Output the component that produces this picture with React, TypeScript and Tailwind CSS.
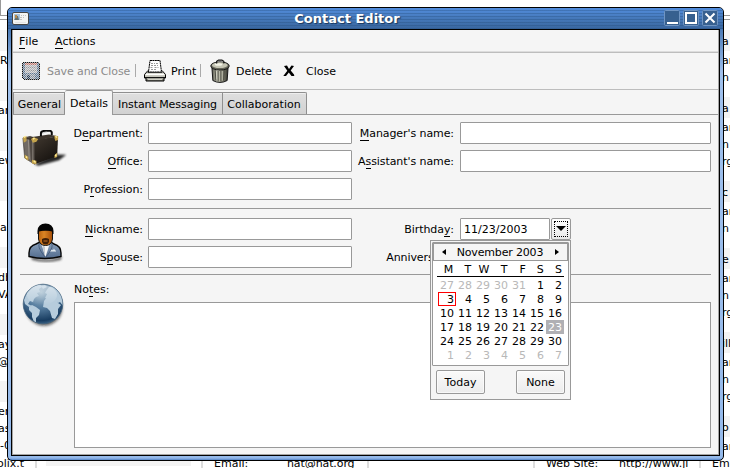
import React from "react";

type BackRow = [number, string, boolean?];

const leftRows: BackRow[] = [
  [21, "", true], [17, "R"], [12, ""], [21, "", true], [17, "ar"], [12, ""], [21, "", true], [17, "ew"], [12, ""],
  [21, "", true], [17, ""], [17, "a"], [12, ""], [21, "", true], [17, "dh"], [17, "VA"], [12, ""],
  [21, "", true], [17, "ay"], [17, "@n"], [12, ""], [21, "", true], [17, "er"], [17, "as"], [17, "-0"],
];

const rightRows: BackRow[] = [
  [21, "a", true], [17, "ar"], [17, "n"], [12, ""],
  [21, "a", true], [17, "ar"], [17, "n"], [17, "rg"], [12, ""],
  [21, "c", true], [17, "ar"], [17, "n"], [12, ""],
  [21, "e", true], [17, "ar"], [17, "n"], [17, "rg"], [12, ""],
  [21, "ill", true], [17, "ar"], [17, "n"], [17, "rg"], [12, ""],
  [21, "o", true], [17, "ar"],
];

function BackColumn({ rows, right }: { rows: BackRow[]; right?: boolean }) {
  return (
    <div className="w-[16px]">
      <div className={`h-[16px] border-b border-[#999] bg-white ${right ? "" : "border-l"}`} />
      <div className="h-[14px] bg-white pt-[3px]">
        <div className="h-px bg-[#999]" />
      </div>
      {rows.map(([h, text, band], i) => (
        <div
          key={i}
          className={`flex items-center whitespace-nowrap pt-[2px] ${right ? "pl-[8px]" : ""} ${band ? "bg-[#f3f3f3]" : "bg-white"}`}
          style={{ height: h }}
        >
          <span className={!right && text.length > 1 && text !== "-0" ? "-ml-[2px]" : ""}>{text}</span>
        </div>
      ))}
    </div>
  );
}

function Backdrop() {
  return (
    <div className="flex h-[468px] w-[730px] flex-col overflow-hidden bg-white">
      <div className="flex h-[454px] justify-between">
        <BackColumn rows={leftRows} />
        <BackColumn rows={rightRows} right />
      </div>
      <div className="flex h-[18px] shrink-0 items-center whitespace-nowrap pt-[2px]">
        <span className="-ml-[3px] w-[38px]">olix.t</span>
        <span className="h-full w-[2px] bg-[#ddd]" />
        <span className="mb-[9px] ml-[9px] h-[12px] w-[145px] bg-[#f3f3f3]" />
        <span className="ml-[10px] h-full w-[2px] bg-[#ddd]" />
        <span className="ml-[11px] w-[73px]">Email:</span>
        <span className="w-[80px] tracking-[-0.1px]">nat@nat.org</span>
        <span className="h-full w-[2px] bg-[#ddd]" />
        <span className="ml-[164px] h-full w-[2px] bg-[#ddd]" />
        <span className="ml-[11px] w-[73px]">Web Site:</span>
        <span className="w-[80px]">http://www.jl</span>
        <span className="h-full w-[2px] bg-[#ddd]" />
        <span className="ml-[11px]">Em</span>
      </div>
    </div>
  );
}

function Key({ children }: { children: string }) {
  return <span className="inline-block h-[14px] border-b border-black leading-[13px]">{children}</span>;
}

function CardIcon() {
  return (
    <svg width="17" height="13" viewBox="0 0 17 13">
      <rect x=".5" y=".5" width="16" height="12" rx="1.5" fill="#f4f4f2" stroke="#454545" />
      <rect x="2" y="2" width="6" height="6" fill="#a9c4dc" />
      <path d="M3 7 3.5 4 6 4 7 8H2z" fill="#66706d" />
      <rect x="3" y="3" width="2" height="3" fill="#b98a48" />
      <path d="M9 3.5h1m1 0h1m1 0h1M8 5.5h2m1 0h1M8 7.5h2" stroke="#c2c2c2" />
      <path d="M3 10.5h11" stroke="#e4e4e4" />
    </svg>
  );
}

function FloppyIcon() {
  return (
    <svg width="18" height="18" viewBox="0 0 18 18" shapeRendering="crispEdges">
      <defs>
        <pattern id="stipple" width="2" height="2" patternUnits="userSpaceOnUse">
          <rect width="1" height="1" fill="#f5f5f5" />
          <rect x="1" y="1" width="1" height="1" fill="#f5f5f5" />
        </pattern>
      </defs>
      <path d="M1 0h16v1h1v16h-1v1H2v-1H1v-1H0V1h1z" fill="#111" />
      <path d="M1 1h16v16H2v-1H1z" fill="#5f7690" />
      <rect x="3" y="1" width="12" height="10" fill="#b2b2b6" />
      <rect x="3" y="1" width="12" height="2" fill="#c27a70" />
      <path d="M4 5.5h10M4 8.5h10" stroke="#999" />
      <rect x="4" y="12" width="9" height="5" fill="#8a939e" />
      <rect x="5" y="13" width="3" height="4" fill="#2c4057" />
      <rect width="18" height="18" fill="url(#stipple)" opacity=".65" />
    </svg>
  );
}

function PrinterIcon() {
  return (
    <svg width="22" height="22" viewBox="0 0 22 22">
      <defs>
        <linearGradient id="prn" x1="0" y1="0" x2="0" y2="1">
          <stop offset="0" stopColor="#f3f3ed" />
          <stop offset=".55" stopColor="#c8c8be" />
          <stop offset="1" stopColor="#77776d" />
        </linearGradient>
      </defs>
      <path d="M4 10.5h14l3.5 4v3.5H20v3H2v-3H.5v-3.5z" fill="url(#prn)" stroke="#000" />
      <path d="M6 .5h10l1.5 11.5h-13z" fill="#fff" stroke="#000" strokeDasharray="2 .4" />
      <path d="M7 3.5h4m1 0h2M7 5.5h7M6.5 7.5h3m1 0h4M7 9.5h5" stroke="#999" strokeDasharray="2 1" />
      <path d="M3.5 12.5h15" stroke="#333" />
      <path d="M2 14.5h18" stroke="#fff" />
      <path d="M1 17.5h20" stroke="#111" />
      <path d="M4 19.5h14" stroke="#d0d0c6" />
    </svg>
  );
}

function TrashIcon() {
  return (
    <svg width="20" height="25" viewBox="0 0 21 25">
      <defs>
        <linearGradient id="can">
          <stop offset="0" stopColor="#55554b" />
          <stop offset=".35" stopColor="#d4d4c2" />
          <stop offset=".65" stopColor="#8c8c7c" />
          <stop offset="1" stopColor="#2f2f29" />
        </linearGradient>
      </defs>
      <path d="M2 8h17l-1 14q-7.5 4-15 0z" fill="url(#can)" stroke="#111" />
      <path d="M5.5 11l.7 11M8.5 12v11M11.5 12v11M15 11l-.7 11" stroke="#4e4e45" strokeWidth="1.2" />
      <path d="M6.5 11l.6 10M12.8 12v10" stroke="#e4e4d5" strokeWidth=".6" />
      <ellipse cx="10.5" cy="6.7" rx="9.7" ry="4.3" fill="#66665a" stroke="#111" />
      <ellipse cx="10.3" cy="5.9" rx="8.3" ry="3" fill="#c5c5b4" />
      <ellipse cx="9" cy="5.2" rx="4" ry="1.3" fill="#f3f3e6" />
      <path d="M7 4V1.8L9 .5h3.5l2 1.3V4" fill="none" stroke="#111" strokeWidth="1.2" />
    </svg>
  );
}

function CloseGlyph() {
  return (
    <svg width="12" height="12" viewBox="0 0 12 12">
      <path d="M1 1 4 .5 6 4 8.5 .5 11 1 7.7 5.5 11 9.5 11.300 11H8.500L5.800 7.500 3 11H.3L4.300 5.800z" fill="#000" />
    </svg>
  );
}

function BriefcaseIcon() {
  return (
    <svg width="46" height="38" viewBox="0 0 51 42">
      <defs>
        <filter id="bsh" x="-30%" y="-50%" width="160%" height="200%"><feGaussianBlur stdDeviation="1.3" /></filter>
        <linearGradient id="bag" x2=".6" y2="1"><stop stopColor="#40382f" /><stop offset="1" stopColor="#16120f" /></linearGradient>
      </defs>
      <path d="M14 38 36 27l13 .5-8 6-23 6z" fill="#000" opacity=".85" filter="url(#bsh)" />
      <path d="m1 9 8-2 6 2-1 29-11-7z" fill="#716a64" stroke="#39332f" strokeWidth=".7" />
      <path d="m8 8 7 3v27l-5-4z" fill="#504943" />
      <path d="M14 11 40 7l-1 22-25 9z" fill="url(#bag)" />
      <path d="m7 9 1 23M12 11v25" stroke="#aaa39a" strokeWidth=".7" />
      <path d="m2 9 28-4 10 2-26 5z" fill="#3d352d" />
      <path d="M21 7V3.500q0-2 3-2.500l6-.5q2 0 3 2v3" fill="none" stroke="#0a0a0a" strokeWidth="2.200" />
      <path d="M22.500 4.500q1-2.500 5-2.500" fill="none" stroke="#aaa" strokeWidth=".7" />
      <path d="m1 8 4-1v5l-3 2zM10 10l3-2 5 2-2 3-4 1zM36 6l4 1v4l-3 1-1-3zM3 27l4 3v4l-4-3zM11 33l5 1v4l-5-1zM36 28l3-3v5l-3 1z" fill="#c4a34b" />
      <path d="m2 8 2-1m8 3 2-1m23-2 2 1M5 29v2m8 3 2 2m22-7 1-2" stroke="#ffee9c" strokeWidth="1.500" />
    </svg>
  );
}

function PersonIcon() {
  return (
    <svg width="37" height="42" viewBox="0 0 37 42">
      <defs>
        <filter id="psh"><feGaussianBlur stdDeviation="1" /></filter>
        <linearGradient id="suit" x2="0" y2="1"><stop stopColor="#8ba2bc" /><stop offset="1" stopColor="#526b8d" /></linearGradient>
        <linearGradient id="skin"><stop stopColor="#b9620f" /><stop offset=".4" stopColor="#da8524" /><stop offset="1" stopColor="#a44d08" /></linearGradient>
      </defs>
      <path d="M3 34Q18 41 34 34l-1 4Q18 42 4 38z" fill="#333" opacity=".7" filter="url(#psh)" />
      <path d="M1 34.500V31q0-7 7-9l4-2h11l3 2q7 2 7 9v3.500q-16 4-32 0z" fill="url(#suit)" stroke="#060606" strokeWidth="1.400" />
      <path d="m13 21 4.500 14L22 21z" fill="#f6f6f5" />
      <path d="m15 23 2 2v10l-2-8z" fill="#c4cbd0" />
      <path d="M12 21q-4 3 5 14m6-14q4 3-5 14" fill="none" stroke="#405575" strokeWidth=".8" />
      <path d="m22 29.500 2-2 1 1 1-2 1 2h1v1z" fill="#e9eff3" />
      <path d="M10.500 8h14v9q-1 6.500-7 6.500t-7-6.500z" fill="url(#skin)" stroke="#111" />
      <path d="M9.500 12V9q.5-7.500 8-7.500t8 7.500v3h-1l-.5-2.500q-6-2-13 0l-.5 2.500z" fill="#050505" />
      <path d="M14 17q3.500-2 7 0v3q-1 2.500-3.500 2.500T14 20z" fill="#402006" />
      <path d="M15.500 18.500h4v1h-4z" fill="#c26c24" />
    </svg>
  );
}

function GlobeIcon() {
  return (
    <svg width="44" height="46" viewBox="0 0 44 46">
      <defs>
        <filter id="gsh"><feGaussianBlur stdDeviation="1.4" /></filter>
        <radialGradient id="sea" cx=".45" cy=".2" r=".8">
          <stop stopColor="#a6bfd0" /><stop offset=".5" stopColor="#547b9d" /><stop offset=".9" stopColor="#183c60" /><stop offset="1" stopColor="#385f81" />
        </radialGradient>
        <linearGradient id="shine" x2="0" y2="1"><stop stopColor="#fff" stopOpacity=".45" /><stop offset="1" stopColor="#fff" stopOpacity="0" /></linearGradient>
        <clipPath id="ball"><circle cx="21" cy="21" r="19.5" /></clipPath>
      </defs>
      <ellipse cx="22" cy="25" rx="18" ry="17.5" fill="#111" opacity=".7" filter="url(#gsh)" />
      <circle cx="21" cy="21" r="19.8" fill="url(#sea)" stroke="#45637c" strokeWidth=".8" />
      <g clipPath="url(#ball)" fill="#b6ccdc">
        <path d="M2 17 5 10l6-6 7-3 2 3-3 2 1 3-3 1 2 3-3 1-2 2-1 3-3-1-2 3 4 2-3 1-4-3z" />
        <path d="m7 24 3-2 4 2 4 3-1 5-3 3v4h-2l-2-5v-4l-3-3z" />
        <path d="m24 8 3-4 4-1 7 6 4 8v7l-4-5-2 1-2-3-4-2-3 1-4-1 2-4-2-1z" />
        <path d="m22 18 3-4 6-1 4 3 1 4 3 2-3 4v5l-3 5-3-1-2-7-3-3-4-1z" />
        <path d="m19 3 4-1 2 2-4 2z" />
      </g>
      <ellipse cx="20" cy="12" rx="15" ry="10" fill="url(#shine)" />
    </svg>
  );
}

function TitleBar() {
  return (
    <div className="-mx-[4px] h-[21px] rounded-t-[4px] bg-[linear-gradient(#528ddd,#4578b9_50%,#39669f)]">
      <div className="flex h-full items-center justify-between rounded-t-[4px] bg-[repeating-linear-gradient(transparent_0px,transparent_2px,#244b7855_2px,#244b7855_3px)] pr-[5px] pl-[4px]">
        <div className="w-[60px]"><CardIcon /></div>
        <div className="mt-[2px] mr-[36px] text-[13px] font-bold whitespace-nowrap text-white [text-shadow:1px_1px_1px_#18365b]">Contact Editor</div>
        <div className="flex w-[60px] justify-end gap-[3px]">
          {["M3 13h11", "M3 3h10v10H3z", "m3.5 3.5 9 9m0-9-9 9"].map((d, i) => (
            <svg key={i} className="h-[16px] w-[16px] shrink-0" viewBox="0 0 16 16">
              <rect x=".5" y=".5" width="15" height="15" rx="1" fill="#37608f" stroke="#7095c2" />
              <path d={d} fill="none" stroke="#fff" strokeWidth="2" />
            </svg>
          ))}
        </div>
      </div>
    </div>
  );
}

function Toolbar() {
  return (
    <div className="flex h-[37px] items-center border-b border-[#bdbdbd] pt-px whitespace-nowrap">
      <div className="ml-[9px] h-[18px] w-[19px]"><FloppyIcon /></div>
      <span className="mt-px ml-[6px] w-[87px] tracking-[-0.1px] text-[#8c8c8c]">Save and Close</span>
      <span className="mb-[2px] ml-px h-[13px] w-px bg-[#aaa]" />
      <span className="ml-[8px] w-[22px]"><PrinterIcon /></span>
      <span className="mt-px ml-[5px] w-[29px]">Print</span>
      <span className="mb-[2px] h-[13px] w-px bg-[#aaa]" />
      <span className="ml-[9px] w-[21px]"><TrashIcon /></span>
      <span className="mt-px ml-[5px] w-[47px]">Delete</span>
      <CloseGlyph />
      <span className="mt-px ml-[11px]">Close</span>
    </div>
  );
}

function Tabs() {
  const tab = "flex h-[22px] items-center justify-center border-t border-r border-[#8f8f8f] bg-[linear-gradient(#dfdfdf,#d2d2d2)] pt-[3px] whitespace-nowrap shadow-[inset_0_1px_#eee]";
  return (
    <div className="flex h-[25px] items-end border-b border-[#999]">
      <div className={`${tab} w-[52px] border-l pl-px`}>General</div>
      <div className="-mb-px flex h-[25px] w-[48px] items-center justify-center rounded-t-[2px] border-t border-r border-[#999] bg-[#f5f5f5] pt-[2px] pl-px">Details</div>
      <div className={`${tab} w-[110px] tracking-[-0.07px]`}>Instant Messaging</div>
      <div className={`${tab} w-[84px] rounded-tr-[2px] pr-px`}>Collaboration</div>
    </div>
  );
}

function Label({ children, className = "" }: { children: React.ReactNode; className?: string }) {
  return <div className={`flex h-[22px] items-center justify-end pt-[3px] tracking-[-0.08px] whitespace-nowrap ${className}`}>{children}</div>;
}

function Field({ className, children }: { className: string; children?: React.ReactNode }) {
  return <div className={`flex h-[22px] items-center rounded-[1px] border border-[#999] bg-white pt-[2px] ${className}`}>{children}</div>;
}

const weekdays = ["M", "T", "W", "T", "F", "S", "S"];
const days = [27, 28, 29, 30, 31, ...Array.from({ length: 30 }, (_, i) => i + 1), 1, 2, 3, 4, 5, 6, 7];

function Calendar() {
  return (
    <div className="absolute top-[240px] left-[430px] h-[160px] w-[141px] border border-[#999] bg-[#f5f5f5] p-px">
      <div className="h-[124px] w-[137px] rounded-[1px] border border-[#999] bg-white">
        <div className="flex h-[18px] items-center justify-between border border-[#999] bg-[#f5f5f5] px-[8px]">
          <svg width="4" height="6" viewBox="0 0 4 6"><path d="M4 0v6L0 3z" /></svg>
          <span className="pt-[2px] pr-px tracking-[-0.17px] whitespace-nowrap">November 2003</span>
          <svg width="4" height="6" viewBox="0 0 4 6"><path d="M0 0v6l4-3z" /></svg>
        </div>
        <div className="mr-[4px] ml-[4px] grid h-[16px] grid-cols-7 border-b border-black text-right">
          {weekdays.map((d, i) => <span key={i} className="pr-[2px] leading-[17px]">{d}</span>)}
        </div>
        <div className="mt-[1px] ml-[5px] grid w-[126px] grid-cols-7">
          {days.map((d, i) => {
            const dim = i < 5 || i > 34;
            const today = i === 7;
            const selected = i === 27;
            return (
              <span
                key={i}
                className={`flex h-[14px] items-center justify-end pt-[2px] pr-[2px] ${dim ? "text-[#b8b8b8]" : ""} ${today ? "shadow-[inset_0_0_0_1px_#f00]" : ""} ${selected ? "bg-[#b0b0b4] text-white" : ""}`}
              >
                {d}
              </span>
            );
          })}
        </div>
      </div>
      <div className="mt-[4px] flex justify-between px-[4px]">
        {["Today", "None"].map((t) => (
          <button key={t} className="h-[24px] w-[49px] rounded-[2px] border border-[#999] bg-[linear-gradient(#fafafa,#ececec)] pt-[2px] shadow-[inset_0_0_0_1px_#fff9]">{t}</button>
        ))}
      </div>
    </div>
  );
}

export default function App() {
  return (
    <div className="relative h-[468px] w-[730px] overflow-hidden font-['DejaVu_Sans',sans-serif] text-[11px] leading-[14px] text-black">
      <Backdrop />
      <div className="absolute top-[7px] left-[7px] flex h-[454px] w-[717px] flex-col rounded-[5px] border border-black bg-[linear-gradient(#4b82c8_0px,#4777b3_20px,#9fc0ec_65px,#94b9ea_450px,#5484c7)] px-[4px] pb-[4px]">
        <TitleBar />
        <div className="-mx-px flex h-[428px] flex-col border border-black bg-[#f5f5f5]">
          <div className="flex grow flex-col border-r border-b border-l border-[#a5a5a5]">
            <div className="flex h-[23px] items-center border-b border-[#bdbdbd] pt-[2px] pl-[6px] shadow-[0_-1px_#ddd_inset]">
              <span className="w-[36px]"><Key>F</Key>ile</span>
              <span><Key>A</Key>ctions</span>
            </div>
            <Toolbar />
            <Tabs />
            <div className="flex flex-col pr-[7px] pl-[7px]">
              <div className="flex h-[94px] border-b border-[#999] pt-[7px]">
                <div className="w-[48px] pt-[8px] pl-[2px]"><BriefcaseIcon /></div>
                <div className="flex w-[75px] flex-col gap-[6px]">
                  <Label>D<Key>e</Key>partment:</Label>
                  <Label><Key>O</Key>ffice:</Label>
                  <Label>P<Key>r</Key>ofession:</Label>
                </div>
                <div className="ml-[5px] flex flex-col gap-[6px]">
                  <Field className="w-[204px]" /><Field className="w-[204px]" /><Field className="w-[204px]" />
                </div>
                <div className="flex w-[102px] flex-col gap-[6px]">
                  <Label><Key>M</Key>anager's name:</Label>
                  <Label>A<Key>s</Key>sistant's name:</Label>
                </div>
                <div className="ml-[6px] flex flex-col gap-[6px]">
                  <Field className="w-[251px]" /><Field className="w-[251px]" />
                </div>
              </div>
              <div className="flex h-[66px] border-b border-[#999] pt-[9px]">
                <div className="w-[48px] pt-[4px] pl-[8px]"><PersonIcon /></div>
                <div className="flex w-[75px] flex-col gap-[6px]">
                  <Label><Key>N</Key>ickname:</Label>
                  <Label>S<Key>p</Key>ouse:</Label>
                </div>
                <div className="ml-[5px] flex flex-col gap-[6px]">
                  <Field className="w-[204px]" /><Field className="w-[204px]" />
                </div>
                <div className="flex w-[102px] flex-col gap-[6px]">
                  <Label>Birthda<Key>y</Key>:</Label>
                  <Label>Anniversary:</Label>
                </div>
                <Field className="ml-[6px] w-[90px] pl-[3px]">11/23/2003</Field>
                <div className="ml-px flex h-[22px] w-[20px] rounded-[2px] border border-[#999] bg-[linear-gradient(#fff,#e8e8e8)] p-[2px]">
                  <div className="flex grow items-center justify-center border border-dotted border-black">
                    <svg width="10" height="5" viewBox="0 0 10 5"><path d="M0 0h10L5 5z" /></svg>
                  </div>
                </div>
              </div>
              <div className="flex">
                <div className="w-[54px] pt-[8px] pl-[2px]"><GlobeIcon /></div>
                <div>
                  <div className="h-[27px] pt-[8px]">No<Key>t</Key>es:</div>
                  <div className="h-[146px] w-[637px] border border-[#999] bg-white" />
                </div>
              </div>
            </div>
          </div>
        </div>
      </div>
      <Calendar />
    </div>
  );
}
